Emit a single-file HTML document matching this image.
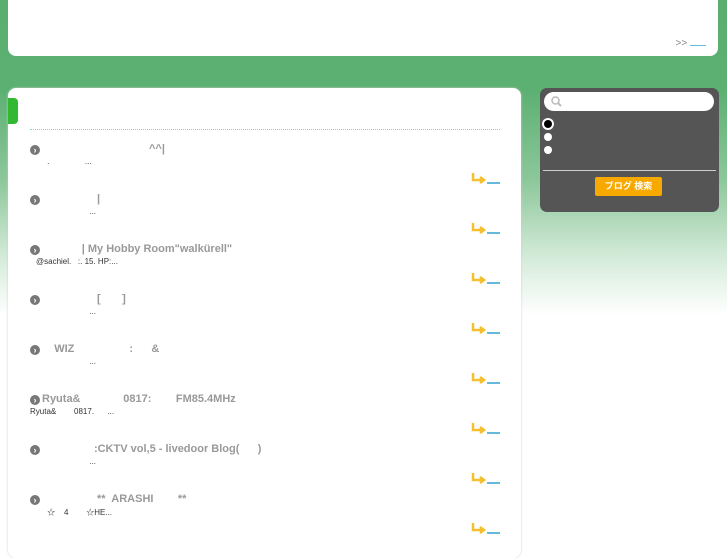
<!DOCTYPE html><html><head><meta charset="utf-8"><style>
html{background:#fff}
body{margin:0;width:727px;height:545px;overflow:hidden;position:relative;font-family:"Liberation Sans","Noto Sans CJK JP",sans-serif;background:#fff}
.bg{position:absolute;left:0;top:0;width:727px;height:320px;background:linear-gradient(#5aaf70 0,#5cb072 90px,#8cc79a 180px,#d6ecdb 260px,#fff 315px)}
.top{position:absolute;left:8px;top:-5px;width:710px;height:61px;background:#fff;border-radius:0 0 8px 8px}
.more{position:absolute;right:12px;top:42px;font-size:10px;color:#888}
.more u{text-decoration:none;border-bottom:1px solid #6bd;display:inline-block;width:16px;height:8px}
.main{position:absolute;left:8px;top:88px;width:513px;height:470px;background:#fff;border-radius:8px;box-shadow:0 0 2px #ccc}
.tab{position:absolute;left:0;top:10px;width:10px;height:26px;background:#33b833;border-radius:0 4px 4px 0}
.line{position:absolute;left:22px;top:41px;width:470px;border-top:1px dotted #8cd}
.e{position:absolute;left:30px;width:470px;height:50px}
.ic{position:absolute;left:0;top:0;width:10px;height:10px;border-radius:50%;background:#777;color:#fff;font-size:9px;line-height:10px;text-align:center;font-weight:bold}
.t{position:absolute;left:12px;top:-2px;font-size:11px;font-weight:bold;color:#999;white-space:pre}
.x{position:absolute;left:6px;top:12px;font-size:8px;color:#333;white-space:pre}
.e::after{content:"";position:absolute;right:0;top:37px;width:13px;height:2px;background:#6bd}
.side{position:absolute;left:540px;top:88px;width:179px;height:124px;background:#555;border-radius:7px}
.sb{position:absolute;left:4px;top:4px;width:170px;height:19px;background:#fff;border-radius:10px}
.r{position:absolute;left:4px;width:8px;height:8px;border-radius:50%;background:#fff}
.hr{position:absolute;left:3px;top:82px;width:173px;border-top:1px solid #ccc}
.btn{position:absolute;left:55px;top:89px;width:67px;height:19px;background:#f7a900;border-radius:2px;color:#fff;font-size:9px;font-weight:bold;text-align:center;line-height:19px}
</style></head><body>
<div class="bg"></div>
<div class="top"><div class="more">&gt;&gt; <u></u></div></div>
<div class="main"><div class="tab"></div><div class="line"></div></div>
<div class="side"><div class="sb"><svg width="14" height="14" style="position:absolute;left:6px;top:3px"><circle cx="5.5" cy="5.5" r="3.5" fill="none" stroke="#bbb" stroke-width="1.5"/><path d="M8 8l3 3" stroke="#bbb" stroke-width="2"/></svg></div>
<div class="r" style="top:32px;background:#000;box-shadow:0 0 0 2px #fff"></div><div class="r" style="top:45px"></div><div class="r" style="top:58px"></div>
<div class="hr"></div><div class="btn">ブログ 検索</div></div>
<div class="e" style="top:145px"><div class="ic">›</div><div class="t">                                   ^^|</div><div class="x">     .                ...</div></div>
<div class="e" style="top:195px"><div class="ic">›</div><div class="t">                  |</div><div class="x">                        ...</div></div>
<div class="e" style="top:245px"><div class="ic">›</div><div class="t">             | My Hobby Room"walkürell"</div><div class="x">@sachiel.   :. 15. HP:...</div></div>
<div class="e" style="top:295px"><div class="ic">›</div><div class="t">                  [       ]</div><div class="x">                        ...</div></div>
<div class="e" style="top:345px"><div class="ic">›</div><div class="t">    WIZ                  :      &amp;</div><div class="x">                        ...</div></div>
<div class="e" style="top:395px"><div class="ic">›</div><div class="t">Ryuta&amp;              0817:        FM85.4MHz</div><div class="x" style="left:0">Ryuta&amp;        0817.      ...</div></div>
<div class="e" style="top:445px"><div class="ic">›</div><div class="t">                 :CKTV vol,5 - livedoor Blog(      )</div><div class="x">                        ...</div></div>
<div class="e" style="top:495px"><div class="ic">›</div><div class="t">                  **  ARASHI        **</div><div class="x">     ☆    4        ☆HE...</div></div>
<svg width="727" height="545" style="position:absolute;left:0;top:0">
<g fill="none" stroke="#f5c030" stroke-width="2.5">
<path d="M473 173v7h10M480 177l4 3-4 3"/><path d="M473 223v7h10M480 227l4 3-4 3"/><path d="M473 273v7h10M480 277l4 3-4 3"/><path d="M473 323v7h10M480 327l4 3-4 3"/><path d="M473 373v7h10M480 377l4 3-4 3"/><path d="M473 423v7h10M480 427l4 3-4 3"/><path d="M473 473v7h10M480 477l4 3-4 3"/><path d="M473 523v7h10M480 527l4 3-4 3"/>
</g></svg>
</body></html>
